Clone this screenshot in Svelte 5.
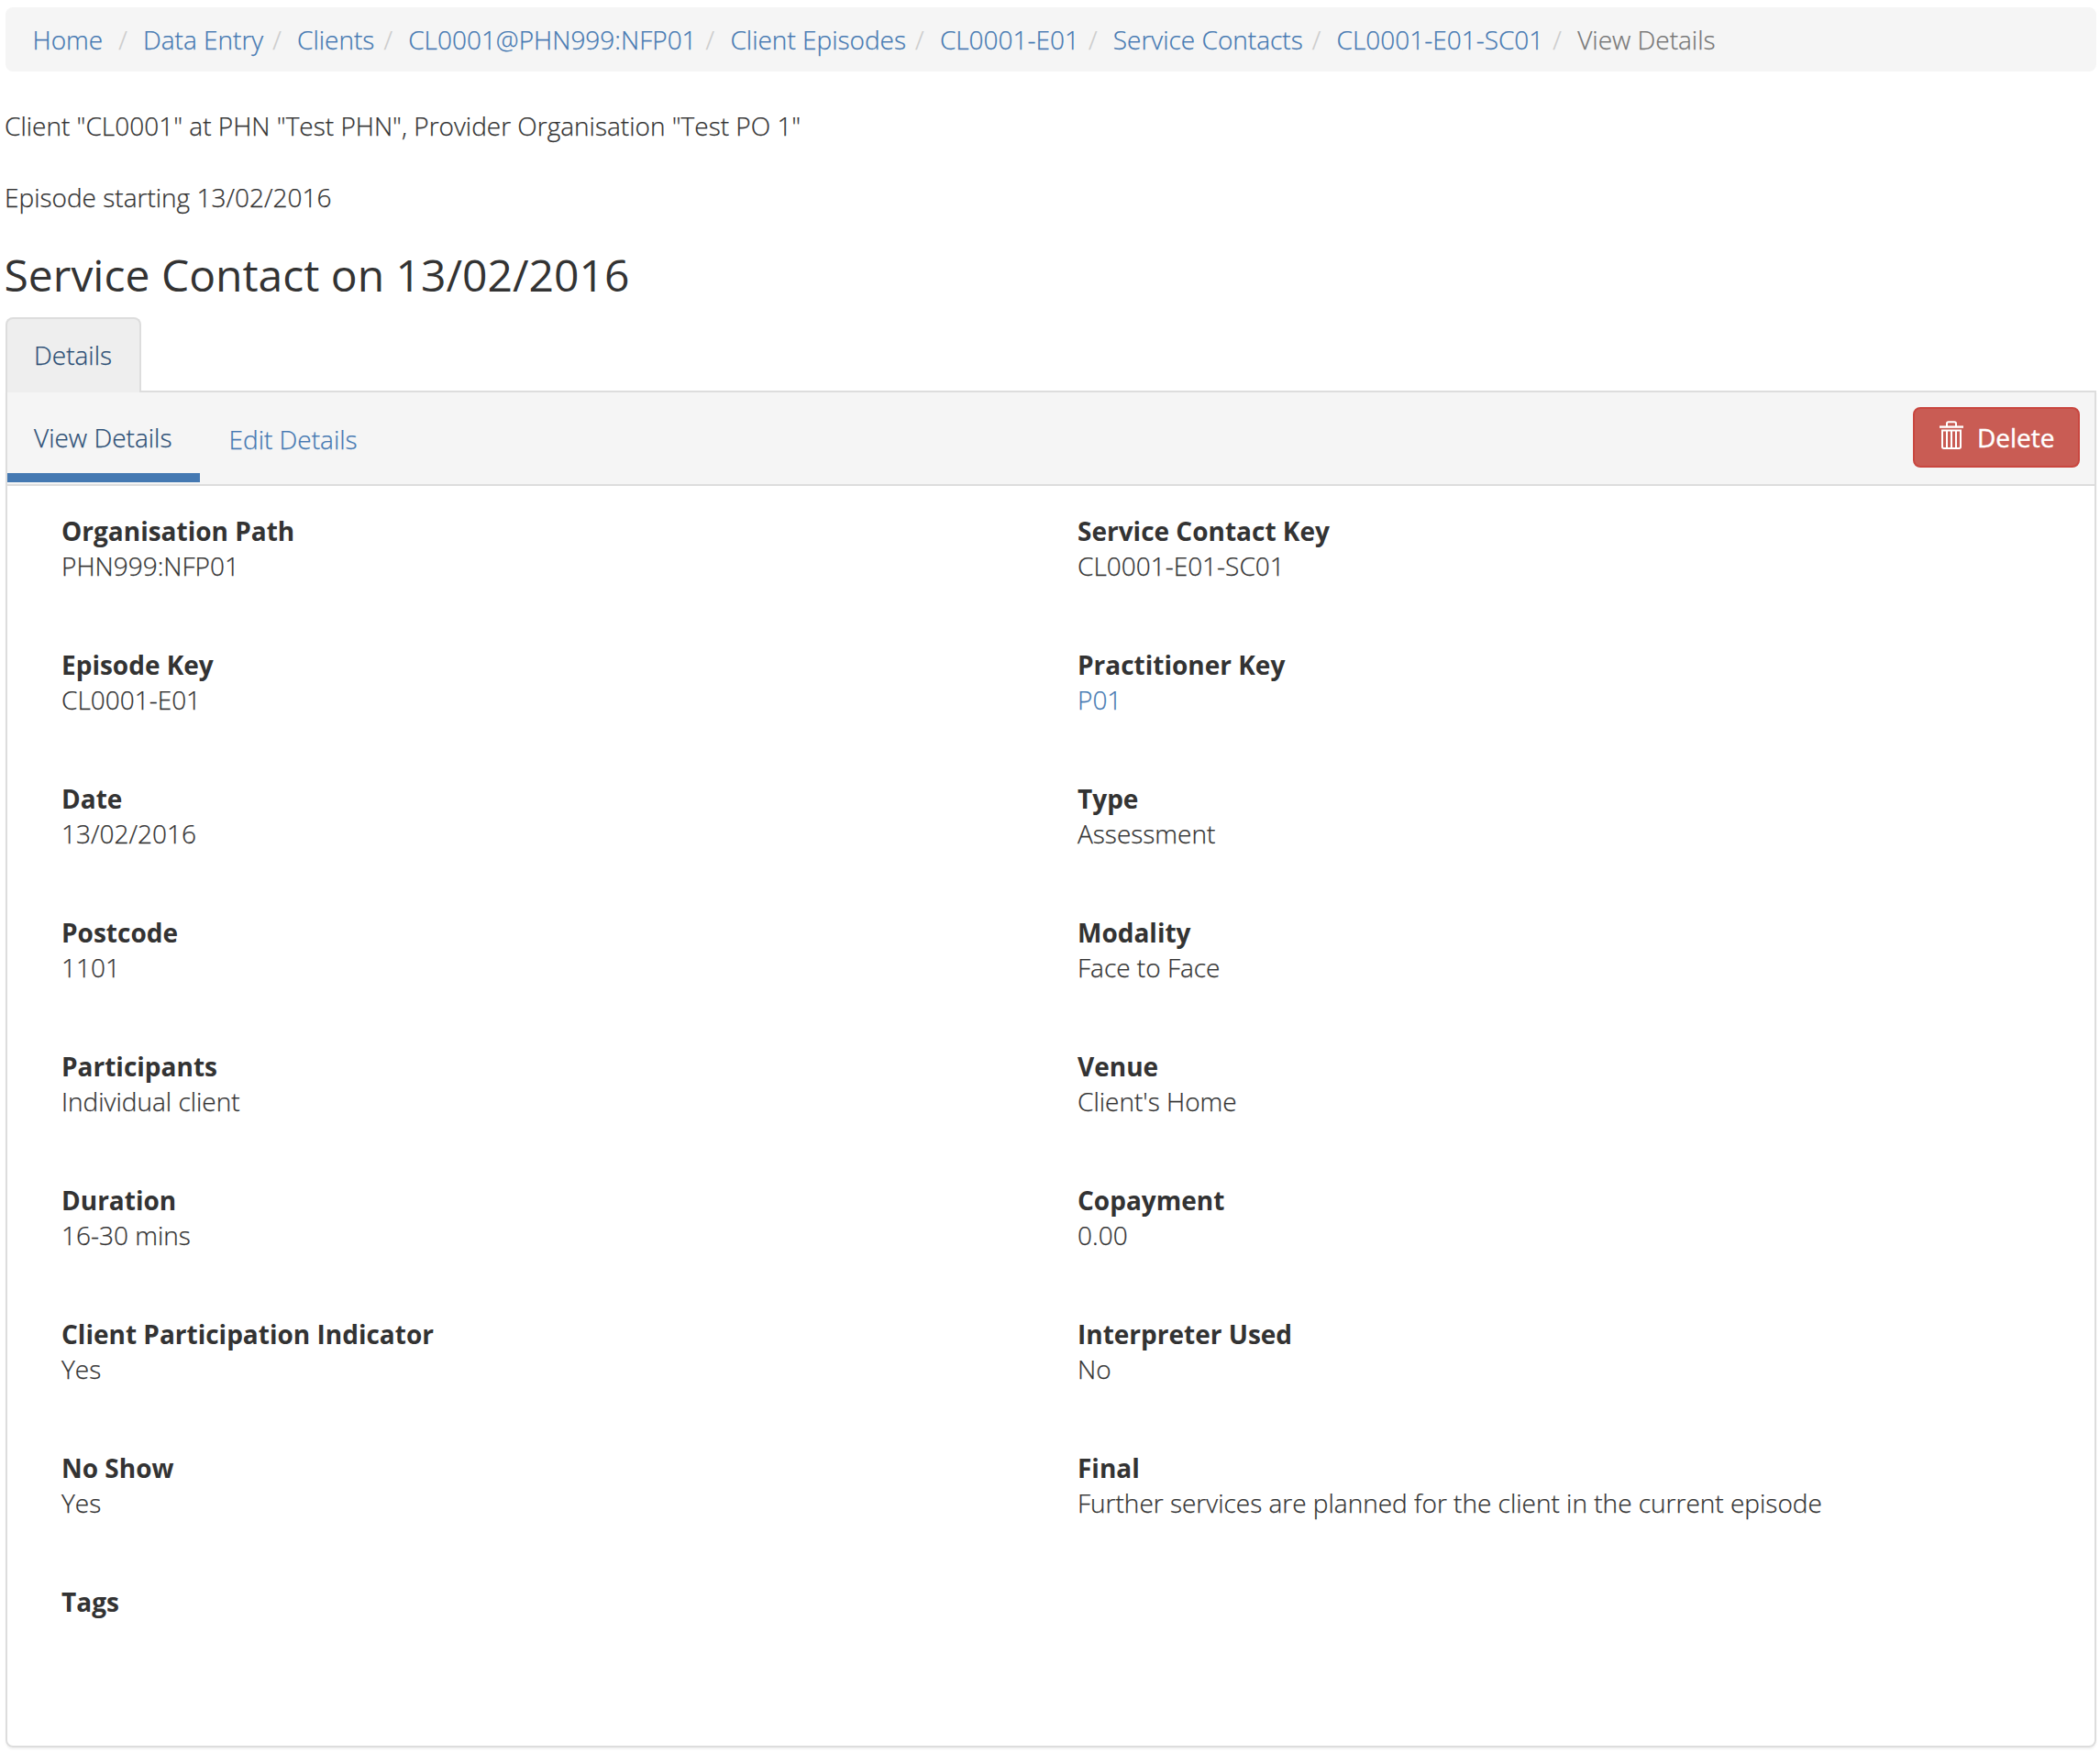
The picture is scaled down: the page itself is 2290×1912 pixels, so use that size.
<script>
  const crumbs = [
    'Home',
    'Data Entry',
    'Clients',
    'CL0001@PHN999:NFP01',
    'Client Episodes',
    'CL0001-E01',
    'Service Contacts',
    'CL0001-E01-SC01'
  ];

  const fields = [
    { label: 'Organisation Path', value: 'PHN999:NFP01' },
    { label: 'Service Contact Key', value: 'CL0001-E01-SC01' },
    { label: 'Episode Key', value: 'CL0001-E01' },
    { label: 'Practitioner Key', value: 'P01', link: true },
    { label: 'Date', value: '13/02/2016' },
    { label: 'Type', value: 'Assessment' },
    { label: 'Postcode', value: '1101' },
    { label: 'Modality', value: 'Face to Face' },
    { label: 'Participants', value: 'Individual client' },
    { label: 'Venue', value: "Client's Home" },
    { label: 'Duration', value: '16-30 mins' },
    { label: 'Copayment', value: '0.00' },
    { label: 'Client Participation Indicator', value: 'Yes' },
    { label: 'Interpreter Used', value: 'No' },
    { label: 'No Show', value: 'Yes' },
    { label: 'Final', value: 'Further services are planned for the client in the current episode' },
    { label: 'Tags', value: '' }
  ];
</script>

<main>
  <ol class="breadcrumb">
    {#each crumbs as crumb}
      <li><a href="#top">{crumb}</a></li>
    {/each}
    <li class="current">View Details</li>
  </ol>

  <p>Client "CL0001" at PHN "Test PHN", Provider Organisation "Test PO 1"</p>
  <p>Episode starting 13/02/2016</p>
  <h2>Service Contact on 13/02/2016</h2>

  <div class="tabs"><a class="tab" href="#top">Details</a></div>

  <section class="panel">
    <nav class="subnav">
      <a class="sub active" href="#top">View Details</a>
      <a class="sub" href="#top">Edit Details</a>
      <button type="button">
        <svg width="26" height="32" viewBox="0 0 26 32" fill="none" stroke="#fff">
          <path d="M0 6.6H26" stroke-width="2.4" />
          <path d="M8 6V3Q8 1.2 9.8 1.2H16.2Q18 1.2 18 3V6" stroke-width="2" />
          <path d="M3 10.5H23V28.3Q23 30 21.3 30H4.7Q3 30 3 28.3Z" stroke-width="2" />
          <path d="M8 10.5V30M13 10.5V30M18 10.5V30" stroke-width="2" />
        </svg>
        <span>Delete</span>
      </button>
    </nav>
    <dl class="fields">
      {#each fields as field}
        <div class="field">
          <dt>{field.label}</dt>
          <dd>{#if field.link}<a href="#top">{field.value}</a>{:else}{field.value}{/if}</dd>
        </div>
      {/each}
    </dl>
  </section>
</main>

<style>
  :global(body) {
    background: #fff;
  }
  main {
    box-sizing: border-box;
    height: 1912px;
    padding: 8px 4px 6px 6px;
    display: flex;
    flex-direction: column;
    font: 300 28px/40px 'Open Sans', sans-serif;
    -webkit-text-stroke: 0.25px currentColor;
    color: #333;
    overflow: hidden;
  }
  a {
    color: #4579b2;
    text-decoration: none;
  }
  .breadcrumb {
    list-style: none;
    margin: 0 0 39px;
    padding: 0 29.5px;
    height: 70px;
    box-sizing: border-box;
    display: flex;
    align-items: center;
    background: #f5f5f5;
    border-radius: 8px;
  }
  .breadcrumb li {
    white-space: pre;
  }
  .breadcrumb li + li::before {
    content: '/\00a0';
    padding: 0 10px;
    color: #ccc;
  }
  .breadcrumb li:first-child {
    margin-right: 7px;
  }
  .breadcrumb .current {
    color: #777;
  }
  p {
    margin: 0 0 38px -1px;
  }
  h2 {
    margin: 1px 0 20px -1.5px;
    font-size: 48px;
    line-height: 52px;
    font-weight: 400;
    -webkit-text-stroke: 0;
  }
  .tabs {
    display: flex;
    height: 80px;
  }
  .tab {
    box-sizing: border-box;
    width: 148px;
    height: 82px;
    padding: 19px 0 0 29px;
    border: 2px solid #ddd;
    border-bottom: 0;
    border-radius: 8px 8px 0 0;
    background: #eee;
    color: #2c4f75;
    z-index: 1;
  }
  .panel {
    flex: 1;
    border: 2px solid #ddd;
    border-radius: 0 0 8px 8px;
    box-shadow: 0 2px 2px rgba(0, 0, 0, 0.05);
  }
  .subnav {
    display: flex;
    height: 100px;
    background: #f5f5f5;
    border-bottom: 2px solid #ddd;
  }
  .sub {
    box-sizing: border-box;
    height: 98px;
    padding: 31px 30px 0 31.5px;
  }
  .sub.active {
    width: 210px;
    padding: 29px 0 0 29px;
    border-bottom: 10px solid #4579b2;
    color: #2c4f75;
  }
  button {
    box-sizing: border-box;
    width: 182px;
    height: 66px;
    margin: 16px 16px 0 auto;
    padding: 0 0 0 27px;
    display: flex;
    align-items: center;
    gap: 15px;
    border: 2px solid #c9463f;
    border-radius: 8px;
    background: #c95c54;
    color: #fff;
    font: 400 28px/40px 'Open Sans', sans-serif;
    -webkit-text-stroke: 0.4px #fff;
  }
  button svg {
    margin-bottom: 4px;
  }
  .fields {
    margin: 0;
    padding: 30px 0 0 59px;
    display: grid;
    grid-template-columns: 1108px 1fr;
    grid-auto-rows: 146px;
    line-height: 38px;
  }
  dt {
    font-weight: 700;
    -webkit-text-stroke: 0;
  }
  dd {
    margin: 0;
  }
</style>
